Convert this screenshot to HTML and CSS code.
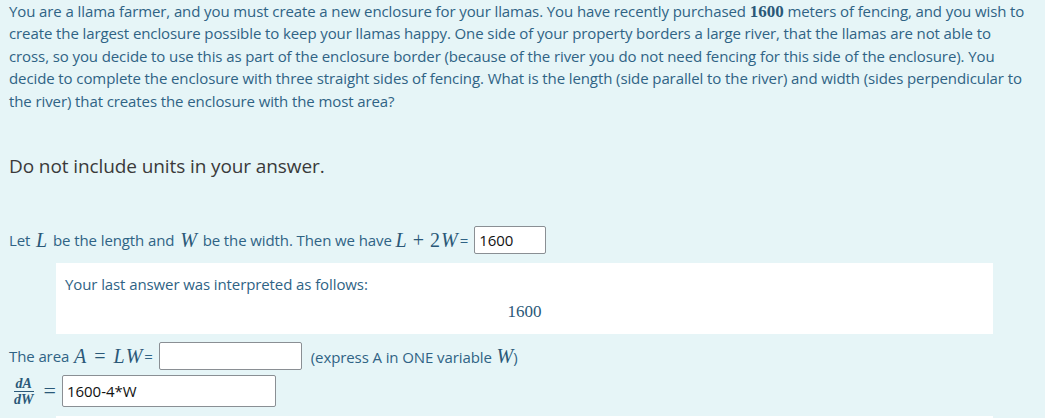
FILE: index.html
```html
<!DOCTYPE html>
<html>
<head>
<meta charset="utf-8">
<link rel="stylesheet" href="styles.css">
</head>
<body>
<div class="formulation">
  <p class="prompt">You are a llama farmer, and you must create a new enclosure for your llamas. You have recently purchased <span class="mnum">1600</span> meters of fencing, and you wish to create the largest enclosure possible to keep your llamas happy. One side of your property borders a large river, that the llamas are not able to cross, so you decide to use this as part of the enclosure border (because of the river you do not need fencing for this side of the enclosure). You decide to complete the enclosure with three straight sides of fencing. What is the length (side parallel to the river) and width (sides perpendicular to the river) that creates the enclosure with the most area?</p>
  <h4 class="note">Do not include units in your answer.</h4>
  <p class="row row-let">Let <span class="mi">L</span> be the length and <span class="mi">W</span> be the width. Then we have <span class="math"><span class="mi">L</span><span class="mo">+</span><span class="mn">2</span><span class="mi">W</span></span><span class="eq">=</span><input class="ans ans-short" type="text" value="1600"></p>
  <div class="feedback">
    <p class="fb-text">Your last answer was interpreted as follows:</p>
    <p class="fb-math">1600</p>
  </div>
  <p class="row row-area">The area <span class="math"><span class="mi">A</span><span class="mo rel">=</span><span class="mi">L</span><span class="mi">W</span></span><span class="eq">=</span><input class="ans ans-mid" type="text" value=""><span class="hint">(express A in ONE variable <span class="mi">W</span>)</span></p>
  <p class="row row-deriv"><span class="frac"><span class="num">dA</span><span class="den">dW</span></span><span class="mo big">=</span><input class="ans ans-long" type="text" value="1600-4*W"></p>
  <div class="feedback feedback-next"></div>
</div>
</body>
</html>
```

FILE: styles.css
```css
html, body {
  margin: 0;
  padding: 0;
  background: #e6f5f7;
}
body {
  font-family: "Open Sans", "Noto Sans", sans-serif;
  font-size: 15px;
  letter-spacing: -0.1px;
  color: #2f6385;
  overflow: hidden;
  height: 418px;
}
.formulation {
  padding: 0 13px 0 9px;
}
.prompt {
  margin: 0;
  line-height: 22.4px;
}
.mnum {
  font-family: "Liberation Serif", "DejaVu Serif", serif;
  font-weight: bold;
  font-size: 17px;
  line-height: 1;
  letter-spacing: 0;
  color: #2a5878;
}
.note {
  margin: 39px 0 0 0;
  font-weight: normal;
  font-size: 19px;
  line-height: 30px;
  color: #3a3a3a;
}
.row {
  margin: 0;
  display: flex;
  align-items: center;
  white-space: pre;
}
.row-let {
  margin-top: 45px;
}
.mi, .mo, .mn {
  font-family: "Liberation Serif", "DejaVu Serif", serif;
  font-size: 20px;
  letter-spacing: 0;
  color: #2a5878;
}
.mi {
  font-style: italic;
}
.row > .mi {
  padding: 0 2px;
}
.math {
  display: inline-flex;
  align-items: baseline;
}
.math .mi + .mi {
  margin-left: 1px;
}
.mo {
  padding: 0 6px;
}
.mo.rel {
  padding: 0 8px;
}
.row-area .math {
  margin-left: 1px;
}
.mn + .mi {
  margin-left: 1px;
}
.eq {
  margin: 0 6px 0 2px;
}
.ans {
  box-sizing: border-box;
  height: 28px;
  border: 1px solid #8a8f94;
  border-radius: 2px;
  background: #fff;
  font-family: "Open Sans", "Noto Sans", sans-serif;
  font-size: 15px;
  color: #111;
  padding: 0 4px;
  margin: 0;
  outline: none;
}
.ans-short { width: 72px; }
.ans-mid { width: 143px; }
.ans-long { width: 214px; height: 32px; }
.feedback {
  margin: 9px 0 8px 47px;
  width: 937px;
  height: 71px;
  background: #fff;
  box-sizing: border-box;
  padding: 10px 9px 0 9px;
}
.fb-text {
  margin: 0;
  line-height: 22px;
}
.fb-math {
  margin: 7px 0 0 0;
  text-align: center;
  font-family: "Liberation Serif", "DejaVu Serif", serif;
  font-size: 17px;
  letter-spacing: 0;
  color: #2a5878;
}
.hint {
  margin-left: 9px;
}
.hint .mi {
  padding-left: 1px;
}
.row-deriv {
  margin-top: 5px;
}
.frac {
  display: inline-flex;
  flex-direction: column;
  align-items: center;
  font-family: "Liberation Serif", "DejaVu Serif", serif;
  font-style: italic;
  font-weight: bold;
  font-size: 14px;
  line-height: 13px;
  letter-spacing: 0;
  color: #2a5878;
  margin-left: 3px;
}
.num {
  padding: 0 2px 1px;
  border-bottom: 1px solid #2a5878;
}
.den {
  padding: 1px 2px 0;
}
.mo.big {
  font-size: 22px;
  padding: 0 6px 0 8px;
}
.feedback-next {
  margin-top: 9px;
}
```
